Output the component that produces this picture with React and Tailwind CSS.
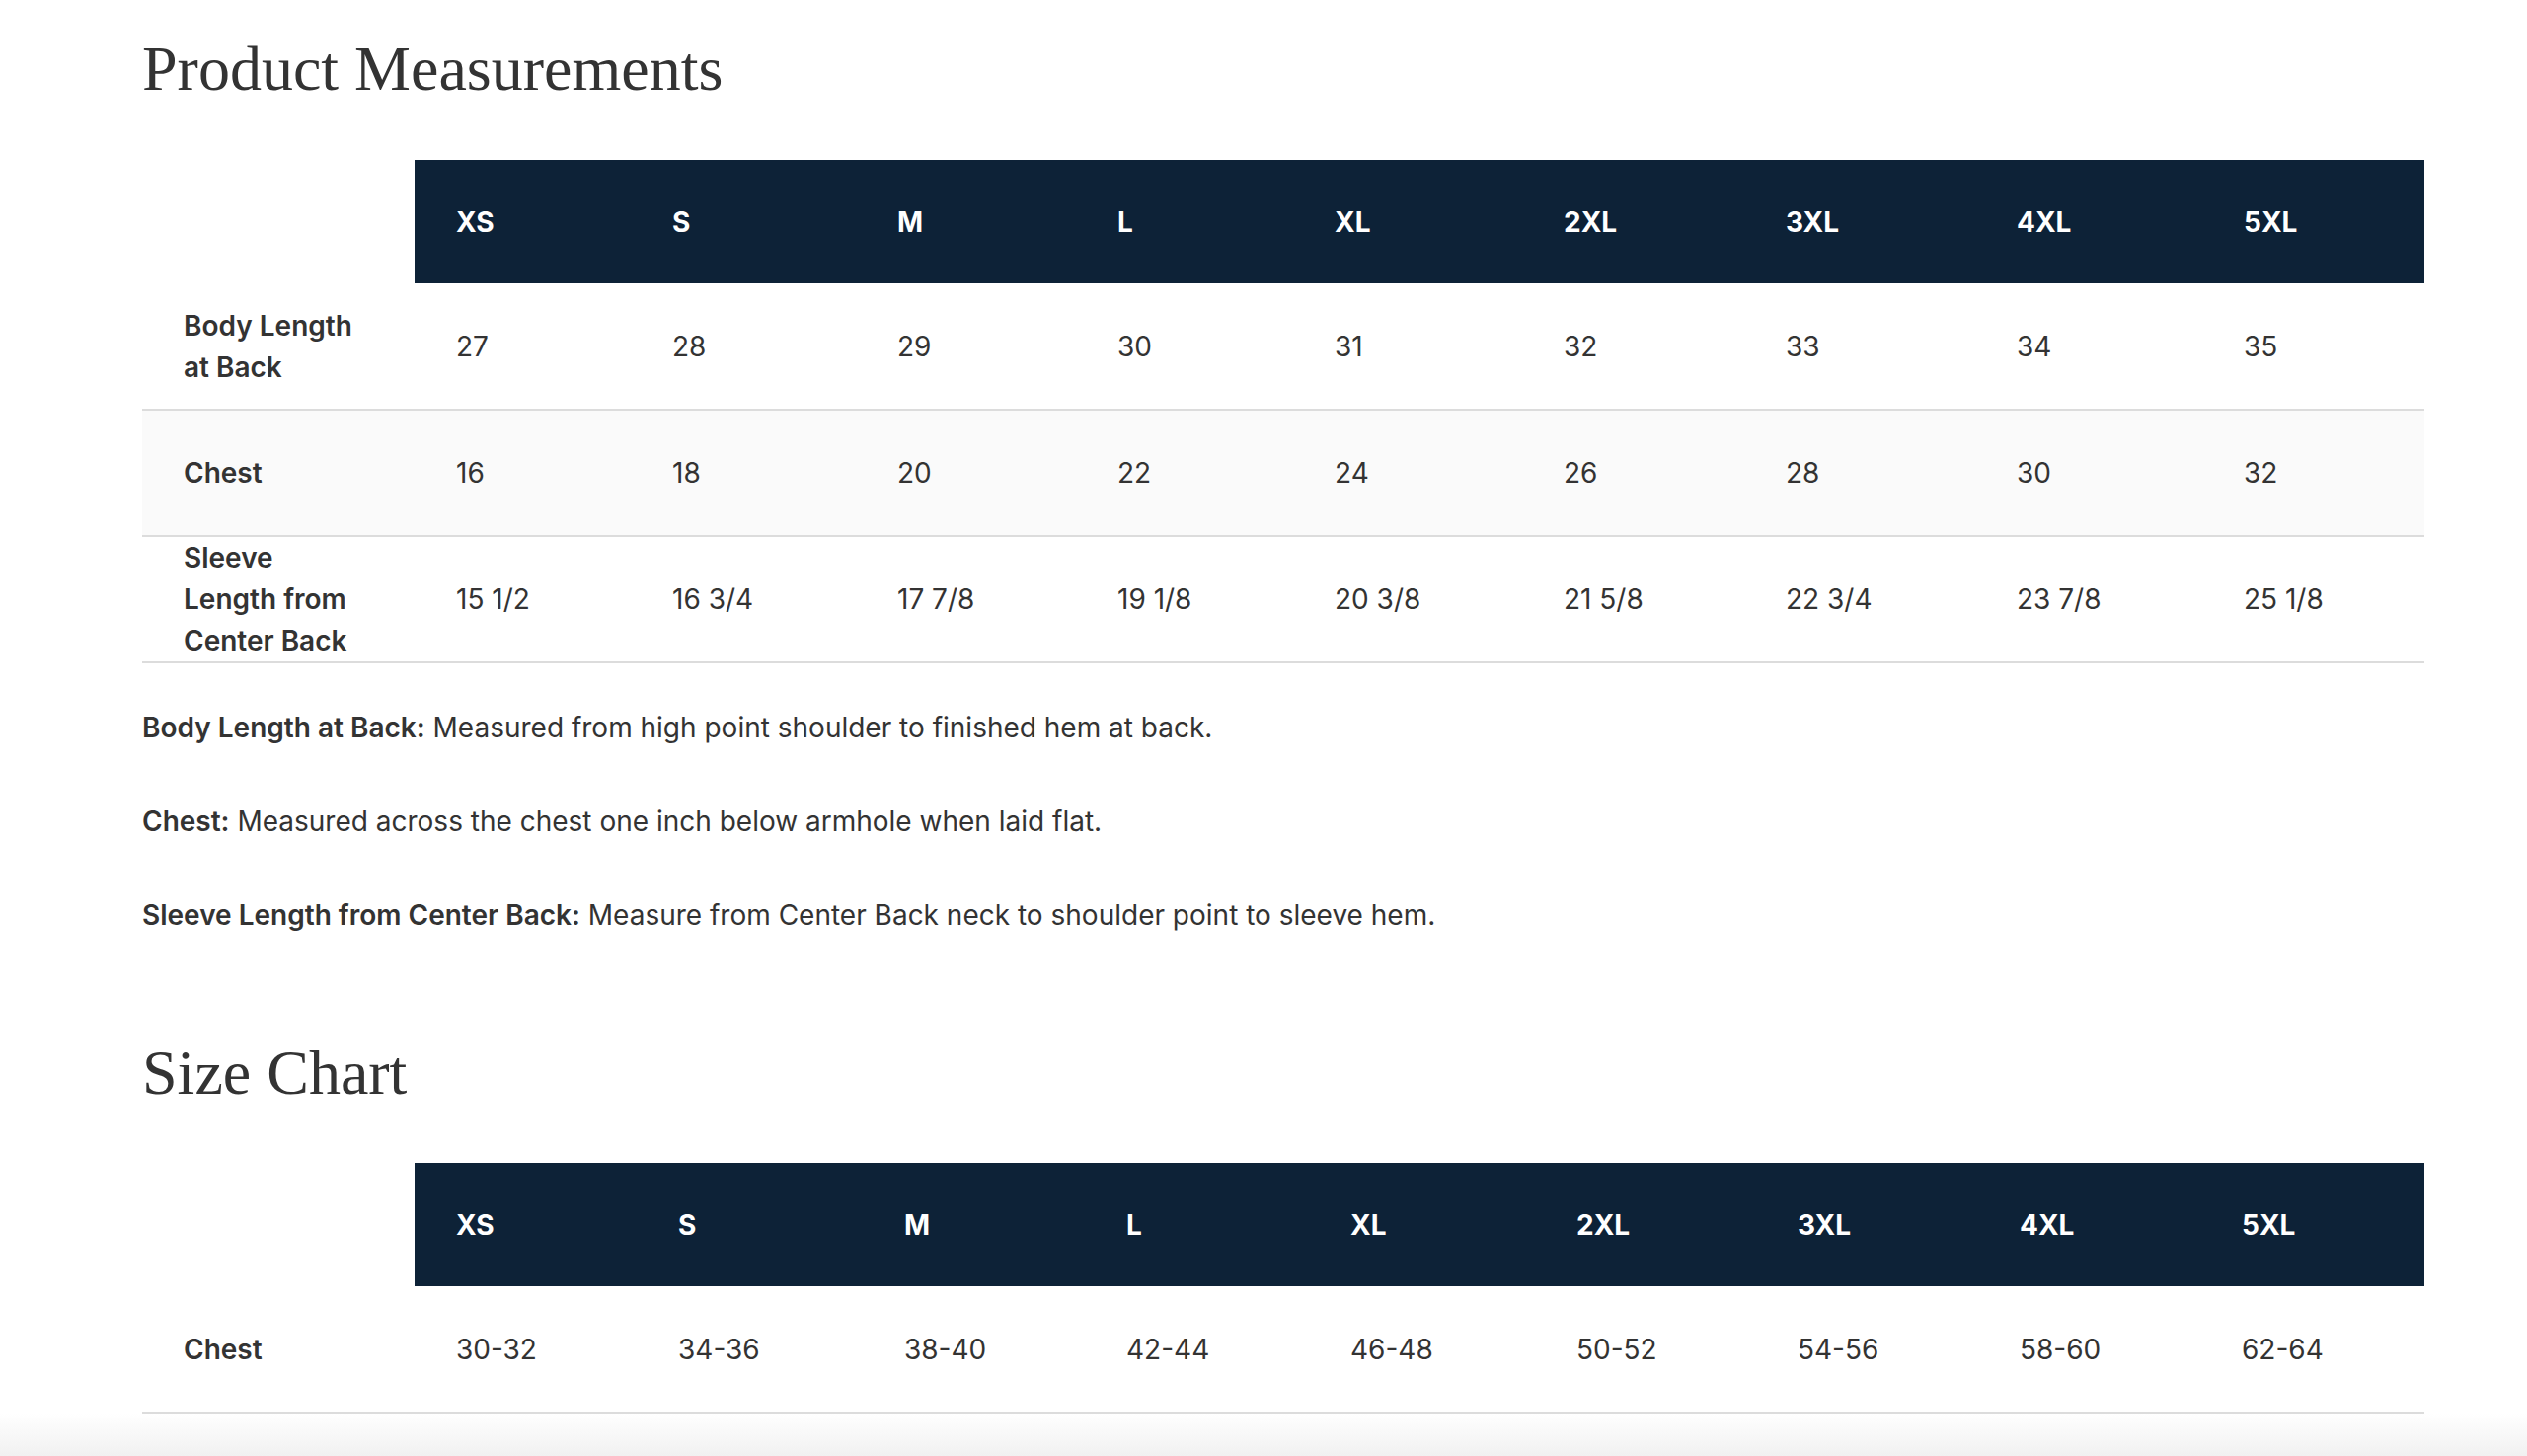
import React from "react";

const sizes = ["XS", "S", "M", "L", "XL", "2XL", "3XL", "4XL", "5XL"];

const measurements = [
  { label: "Body Length at Back", values: ["27", "28", "29", "30", "31", "32", "33", "34", "35"] },
  { label: "Chest", values: ["16", "18", "20", "22", "24", "26", "28", "30", "32"], shaded: true },
  {
    label: "Sleeve Length from Center Back",
    values: ["15 1/2", "16 3/4", "17 7/8", "19 1/8", "20 3/8", "21 5/8", "22 3/4", "23 7/8", "25 1/8"],
  },
];

const chart = [
  { label: "Chest", values: ["30-32", "34-36", "38-40", "42-44", "46-48", "50-52", "54-56", "58-60", "62-64"] },
];

const notes = [
  { term: "Body Length at Back:", text: "Measured from high point shoulder to finished hem at back." },
  { term: "Chest:", text: "Measured across the chest one inch below armhole when laid flat." },
  { term: "Sleeve Length from Center Back:", text: "Measure from Center Back neck to shoulder point to sleeve hem." },
];

const measureCols = ["w-[276px]", "w-[219px]", "w-[228px]", "w-[223px]", "w-[220px]", "w-[232px]", "w-[225px]", "w-[234px]", "w-[230px]", "w-[225px]"];
const chartCols = ["w-[276px]", "w-[225px]", "w-[229px]", "w-[225px]", "w-[227px]", "w-[229px]", "w-[224px]", "w-[225px]", "w-[225px]", "w-[227px]"];

const SizeTable = ({ cols, rows }) => (
  <table className="w-[2312px] table-fixed border-collapse">
    <colgroup>
      {cols.map((c, i) => (
        <col key={i} className={c} />
      ))}
    </colgroup>
    <thead>
      <tr className="h-[125px]">
        <th className="bg-white" />
        {sizes.map(s => (
          <th key={s} className="bg-[#0d2237] px-[42px] text-left align-middle text-[28px] font-bold text-white">
            {s}
          </th>
        ))}
      </tr>
    </thead>
    <tbody>
      {rows.map(row => (
        <tr key={row.label} className={row.shaded ? "h-[128px] border-b-2 border-[#dcdcdc] bg-[#fafafa]" : "h-[128px] border-b-2 border-[#dcdcdc]"}>
          <td className="pl-[42px] pr-[54px] align-middle text-[28px] font-semibold leading-[42px] text-[#333333]">
            {row.label}
          </td>
          {row.values.map((v, i) => (
            <td key={i} className="px-[42px] align-middle text-[28px] leading-[42px] text-[#333333]">
              {v}
            </td>
          ))}
        </tr>
      ))}
    </tbody>
  </table>
);

export default function App() {
  return (
    <div className="min-h-[1475px] bg-white font-['Inter','Liberation_Sans',sans-serif]">
      <div className="px-[144px] pt-[32px]">
        <h1 className="font-['Liberation_Serif',serif] text-[64px] leading-[76px] text-[#333333]">
          Product Measurements
        </h1>
        <div className="mt-[54px]">
          <SizeTable cols={measureCols} rows={measurements} />
        </div>
        <div className="mt-[44px] flex flex-col gap-[53px]">
          {notes.map(n => (
            <p key={n.term} className="text-[28px] leading-[42px] text-[#333333]">
              <span className="font-semibold">{n.term}</span> {n.text}
            </p>
          ))}
        </div>
        <h2 className="mt-[101px] font-['Liberation_Serif',serif] text-[64px] leading-[76px] text-[#333333]">
          Size Chart
        </h2>
        <div className="mt-[53px]">
          <SizeTable cols={chartCols} rows={chart} />
        </div>
      </div>
      <div className="h-[43px] w-full bg-gradient-to-b from-white to-[#f1f1f1]" />
    </div>
  );
}
